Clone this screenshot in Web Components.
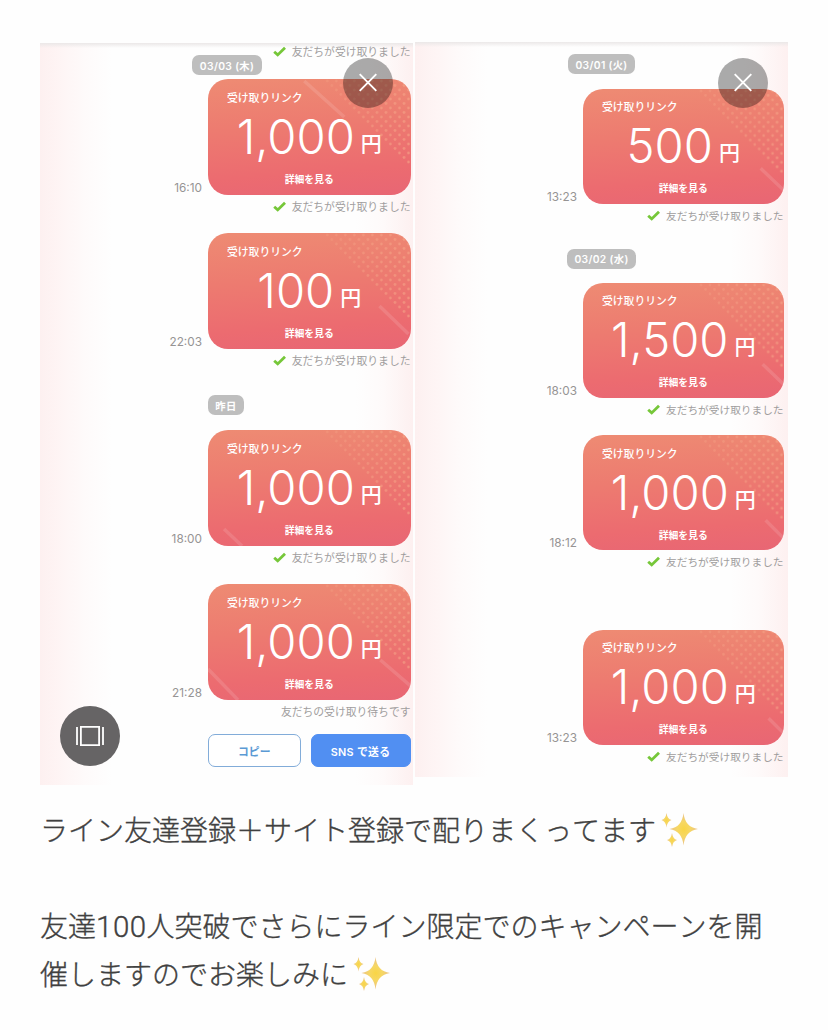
<!DOCTYPE html>
<html lang="ja">
<head>
<meta charset="utf-8">
<title>ライン友達登録</title>
<style>
html,body{margin:0;background:#fefefe}
body{font-family:"Inter","Noto Sans CJK JP",sans-serif}
</style>
</head>
<body>
<post-page></post-page>
<script>
const define = (name, html, setup) => customElements.define(name, class extends HTMLElement {
  connectedCallback() {
    if (this.shadowRoot) return;
    const t = document.createElement('template');
    t.innerHTML = html;
    this.attachShadow({mode: 'open'}).append(t.content.cloneNode(true));
    if (setup) setup(this, this.shadowRoot);
  }
});

define('date-pill', `<style>
:host{display:flex;align-items:center;justify-content:center;box-sizing:border-box;height:20px;border-radius:7px;background:#bebebe;color:#fff;font-size:10.3px;font-weight:600;letter-spacing:.35px;white-space:nowrap}
</style><slot></slot>`);

define('receive-status', `<style>
:host{display:flex;justify-content:flex-end;align-items:center;height:18px;gap:6px;color:#a09d9d;font-size:var(--sf);line-height:18px;white-space:nowrap}
svg{display:block}
span{margin-top:2px}
:host([waiting]) svg{display:none}
</style><svg width="13" height="12" viewBox="0 0 13 12"><path d="M1.200 5.700 4.700 8.900 12 1.700" fill="none" stroke="#76c739" stroke-width="2.8"/></svg><span><slot></slot></span>`);

define('gift-card', `<style>
:host{display:block}
.row{display:flex;justify-content:flex-end;align-items:flex-end;gap:6px}
time{font-size:11.8px;line-height:13px;color:#969494}
.card{position:relative;box-sizing:border-box;width:var(--cw);height:var(--ch);padding-top:11.500px;border-radius:20px;overflow:hidden;color:#fff;background:linear-gradient(176deg,#ee8b73 0%,#ed7b70 40%,#ec6b70 78%,#e86674 100%)}
.art{position:absolute;inset:0;width:100%;height:100%}
.label,.amount,.more{position:relative}
.label{padding-left:19px;font-size:10.8px;line-height:16px;font-weight:500}
.amount{display:flex;justify-content:center;align-items:baseline;gap:6px;height:56px;line-height:59px;font-size:47.200px;font-weight:350}
.yen{position:relative;top:-3px;font-size:21px;font-weight:500}
.more{margin-top:9px;text-align:center;font-size:9.8px;line-height:16px;font-weight:700}
</style>
<div class="row"><time></time><div class="card">
<svg class="art" viewBox="0 0 202 116" preserveAspectRatio="none"><defs><pattern id="d" width="9" height="9" patternUnits="userSpaceOnUse"><circle cx="2" cy="2" r="1.400" fill="#f6a78a"/><circle cx="6.500" cy="6.500" r="1.400" fill="#f6a78a"/></pattern><linearGradient id="f"><stop stop-color="#fff" stop-opacity=".45"/><stop offset="1" stop-color="#fff" stop-opacity="1"/></linearGradient><mask id="m"><path d="M112 0H202V91Z" fill="url(#f)"/></mask></defs><path d="M112 0H202V91Z" fill="url(#d)" mask="url(#m)" opacity=".6"/><path class="streak" fill="none" stroke="#fff" stroke-opacity=".12" stroke-width="3.500"/></svg>
<div class="label">受け取りリンク</div><div class="amount"><span class="num"></span><span class="yen">円</span></div><div class="more">詳細を見る</div></div></div>
<slot></slot>`, (el, r) => {
  r.querySelector('time').textContent = el.getAttribute('time');
  r.querySelector('.num').textContent = el.getAttribute('amount');
  r.querySelector('.streak').setAttribute('d', el.getAttribute('streak') || '');
});

define('action-button', `<style>
:host{display:flex;align-items:center;justify-content:center;box-sizing:border-box;height:33px;border:1.5px solid #82acd9;border-radius:7px;background:#fff;color:#5b9ad4;font-size:10.8px;font-weight:700}
:host([primary]){background:#518ff2;border-color:#518ff2;color:#fff;font-weight:600;letter-spacing:.3px}
</style><slot></slot>`);

define('round-button', `<style>
:host{display:flex;align-items:center;justify-content:center;border-radius:50%}
svg{display:block}
</style><slot></slot>`);

define('chat-shot', `<style>
:host{display:block;position:relative;box-sizing:border-box;width:373px;
background:linear-gradient(#ebe8e8,rgba(255,255,255,0) 5px),linear-gradient(90deg,#fdf0f0 0,#fef5f5 22px,#fefafa 44px,#fefefe 72px,#fefefe 315px,#fefafa 343px,#fdf0f0 100%)}
</style><slot></slot>`);

const spark = `<svg class="spark" width="44" height="36" viewBox="0 0 44 36"><defs><radialGradient id="g"><stop stop-color="#f9d544"/><stop offset=".45" stop-color="#f6d764"/><stop offset="1" stop-color="#e9c08a"/></radialGradient></defs><g fill="url(#g)"><path d="M27.500 1Q29 15.200 42 17Q29 18.800 27.500 33.500Q26 18.800 13.500 17Q26 15.200 27.500 1Z"/><path d="M10.500 1Q11.300 6.900 15.500 8.100Q11.300 9.300 10.500 15.500Q9.700 9.300 5.500 8.100Q9.700 6.900 10.500 1Z"/><path d="M16 21Q16.900 26.900 21 28.100Q16.900 29.300 16 35Q15.100 29.300 11 28.100Q15.100 26.900 16 21Z"/></g></svg>`;

define('post-text', `<style>
:host{display:block;font-family:"Noto Sans CJK JP",sans-serif;font-size:28px;font-weight:300;-webkit-text-stroke:.35px #404040;font-kerning:none;line-height:48px;color:#404040;white-space:nowrap}
p{margin:0;height:48px}
.gap{margin-bottom:48px}
.n{font-family:Roboto,sans-serif;font-size:29.500px;font-weight:350;letter-spacing:.5px;line-height:1}
.spark{vertical-align:-7px;margin-left:-.5px}
</style><p class="gap">ライン友達登録＋サイト登録で配りまくってます${spark}</p>
<p>友達<span class="n">100</span>人突破でさらにライン限定でのキャンペーンを開</p><p>催しますのでお楽しみに${spark}</p>`);

const cross = `<svg width="20" height="20" viewBox="0 0 20 20"><path d="M1.700 1.200 18.300 17.800M18.300 1.200 1.700 17.800" stroke="#fff" stroke-width="1.9"/></svg>`;
const ok = '<receive-status>友だちが受け取りました</receive-status>';

define('post-page', `<style>
:host{display:block;box-sizing:border-box;width:828px;height:1030px;padding:42px 40px 0;overflow:hidden}
.shots{display:flex;align-items:flex-start;gap:2px;height:763px}
.a{--cw:202.5px;--ch:116px;--sf:10.8px;height:742px;margin-top:1px;padding-right:2.5px}
.b{--cw:200.5px;--ch:115px;--sf:10.68px;height:735px;padding-right:4.5px}
gift-card receive-status{margin-top:3px}
.buttons{display:flex;gap:10px;margin:13px 0 0 168px}
.close{position:absolute;top:14.500px;right:20px;width:50px;height:50px;background:rgba(0,0,0,.33)}
.b .close{top:15.500px}
.gallery{position:absolute;left:20px;top:663px;width:60px;height:60px;background:#666465}
</style>
<div class="shots">
<chat-shot class="a">
${ok}
<date-pill style="width:70px;margin:-6px 0 4px 152px">03/03 (木)</date-pill>
<gift-card time="16:10" amount="1,000" streak="M96 2 136 38">${ok}</gift-card>
<gift-card style="margin-top:17px" time="22:03" amount="100" streak="M171 73 200 101">${ok}</gift-card>
<date-pill style="width:36px;margin:25px 0 15px 168px">昨日</date-pill>
<gift-card time="18:00" amount="1,000" streak="M16 99 34 116">${ok}</gift-card>
<gift-card style="margin-top:17px" time="21:28" amount="1,000" streak="M0 85 30 116M172 76 202 102"><receive-status waiting>友だちの受け取り待ちです</receive-status></gift-card>
<div class="buttons"><action-button style="width:93px">コピー</action-button><action-button primary style="width:100.500px">SNS で送る</action-button></div>
<round-button class="close">${cross}</round-button>
<round-button class="gallery"><svg width="28" height="22" viewBox="0 0 28 22"><path d="M4.900 1.900H23.100V20.100H4.900ZM1 2V20M27 2V20" fill="none" stroke="#fff" stroke-width="1.8"/></svg></round-button>
</chat-shot>
<chat-shot class="b">
<div style="height:12px"></div>
<date-pill style="width:67px;margin:0 0 14.500px 153px">03/01 (火)</date-pill>
<gift-card time="13:23" amount="500" streak="M179 80 202 102">${ok}</gift-card>
<date-pill style="width:69px;margin:24px 0 14px 152px">03/02 (水)</date-pill>
<gift-card time="18:03" amount="1,500" streak="M181 82 202 102">${ok}</gift-card>
<gift-card style="margin-top:16.500px" time="18:12" amount="1,000" streak="M184 86 202 104">${ok}</gift-card>
<gift-card style="margin-top:58.500px" time="13:23" amount="1,000" streak="M187 89 202 104">${ok}</gift-card>
<round-button class="close">${cross}</round-button>
</chat-shot>
</div>
<post-text></post-text>`);
</script>
</body>
</html>
